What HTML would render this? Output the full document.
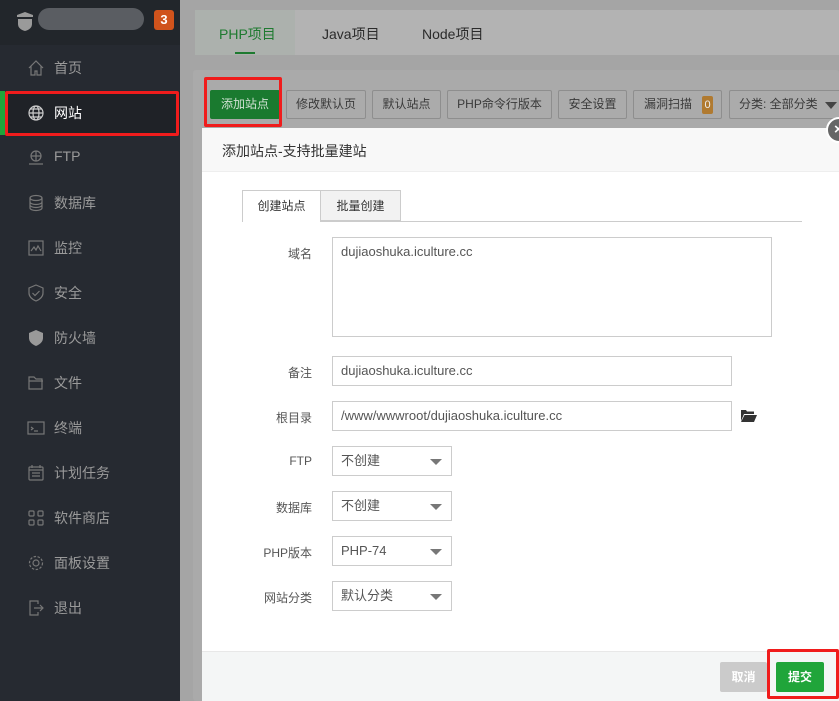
<!DOCTYPE html>
<html><head><meta charset="utf-8"><style>
*{box-sizing:border-box;margin:0;padding:0}
body{width:839px;height:701px;overflow:hidden;background:#a5a5a5;font-family:"Liberation Sans","Noto Sans CJK SC",sans-serif;font-size:13px;color:#333;position:relative}
.a{position:absolute}
#side{left:0;top:0;width:180px;height:701px;background:#262a31}
#logo{left:0;top:0;width:180px;height:45px;background:#22262b}
.item{position:absolute;left:0;width:180px;height:45px;color:#9a9a9a;font-size:14px}
.item span{position:absolute;left:54px;top:13px}
.item svg{position:absolute;left:27px;top:14px}
.btn{position:absolute;top:90px;height:29px;border:1px solid #8e8e8e;border-radius:2px;background:#ababab;color:#3a3a3a;font-size:12px;line-height:27px;text-align:center}
.lbl{position:absolute;width:80px;left:232px;text-align:right;font-size:12px;color:#555}
.inp{position:absolute;left:332px;border:1px solid #ccc;background:#fff;font-size:13px;color:#555;padding-left:8px;line-height:28px}
.sel{width:120px;height:30px}
.sel:after{content:"";position:absolute;right:9px;top:12px;border-left:6px solid transparent;border-right:6px solid transparent;border-top:6px solid #777}
.red{position:absolute;border:3px solid #f01c1c;border-radius:2px}
</style></head><body>
<div id="side" class="a"></div>
<div id="logo" class="a"></div>
<svg class="a" style="left:14px;top:10px" width="22" height="22" viewBox="0 0 22 22"><path d="M3 5l8-3 8 3v2H3z M4 9h14v5q0 5-7 7-7-2-7-7z" fill="#9a9a9a"/></svg>
<div class="a" style="left:38px;top:8px;width:106px;height:22px;border-radius:11px;background:#5a5d62"></div>
<div class="a" style="left:154px;top:10px;width:20px;height:20px;border-radius:3px;background:#d0531c;color:#fff;font-weight:bold;text-align:center;line-height:20px;font-size:13px">3</div>
<div class="a" style="left:0;top:91px;width:5px;height:44px;background:#20a53a"></div>
<div class="a" style="left:5px;top:91px;width:175px;height:44px;background:#1f2227"></div>
<div class="item" style="top:45px"><svg width="18" height="18" viewBox="0 0 18 18" fill="none" stroke="#777" stroke-width="1.2"><path d="M2 9L9 2l7 7M4 7v9h4v-4h2v4h4V7"/></svg><span>首页</span></div>
<div class="item" style="top:90px;color:#fff"><svg width="18" height="18" viewBox="0 0 18 18" fill="none" stroke="#ccc" stroke-width="1.2"><circle cx="9" cy="9" r="7"/><ellipse cx="9" cy="9" rx="3" ry="7"/><path d="M2 9h14M3 5h12M3 13h12"/></svg><span>网站</span></div>
<div class="item" style="top:135px"><svg width="18" height="18" viewBox="0 0 18 18" fill="none" stroke="#777" stroke-width="1.2"><circle cx="9" cy="7" r="5"/><path d="M4 7h10M9 2v10M2 15h14"/></svg><span>FTP</span></div>
<div class="item" style="top:180px"><svg width="18" height="18" viewBox="0 0 18 18" fill="none" stroke="#777" stroke-width="1.2"><ellipse cx="9" cy="4" rx="6" ry="2.5"/><path d="M3 4v10c0 1.5 3 2.5 6 2.5s6-1 6-2.5V4M3 8c0 1.5 3 2.5 6 2.5S15 9.5 15 8M3 11c0 1.5 3 2.5 6 2.5s6-1 6-2.5"/></svg><span>数据库</span></div>
<div class="item" style="top:225px"><svg width="18" height="18" viewBox="0 0 18 18" fill="none" stroke="#777" stroke-width="1.2"><rect x="2" y="2" width="14" height="14"/><path d="M4 12l3-4 2 3 2-4 3 5"/></svg><span>监控</span></div>
<div class="item" style="top:270px"><svg width="18" height="18" viewBox="0 0 18 18" fill="none" stroke="#777" stroke-width="1.2"><path d="M9 1l7 3v5q0 5-7 8-7-3-7-8V4z"/><path d="M5.5 9l2.5 2.5 4.5-4.5"/></svg><span>安全</span></div>
<div class="item" style="top:315px"><svg width="18" height="18" viewBox="0 0 18 18"><path d="M9 1l7 3v5q0 5-7 8-7-3-7-8V4z" fill="#999"/></svg><span>防火墙</span></div>
<div class="item" style="top:360px"><svg width="18" height="18" viewBox="0 0 18 18" fill="none" stroke="#777" stroke-width="1.2"><path d="M2 15V3h5l2 2h6v10z M2 7h14"/></svg><span>文件</span></div>
<div class="item" style="top:405px"><svg width="18" height="18" viewBox="0 0 18 18" fill="none" stroke="#777" stroke-width="1.2"><rect x="1" y="3" width="16" height="12"/><path d="M4 8l2 1.5-2 1.5M7 12h4"/></svg><span>终端</span></div>
<div class="item" style="top:450px"><svg width="18" height="18" viewBox="0 0 18 18" fill="none" stroke="#777" stroke-width="1.2"><rect x="2" y="3" width="14" height="13" rx="1"/><path d="M2 6h14M5 1v3M13 1v3M5 9h8M5 12h8"/></svg><span>计划任务</span></div>
<div class="item" style="top:495px"><svg width="18" height="18" viewBox="0 0 18 18" fill="none" stroke="#777" stroke-width="1.2"><rect x="2" y="2" width="5" height="5" rx="1"/><rect x="11" y="2" width="5" height="5" rx="1"/><rect x="2" y="11" width="5" height="5" rx="1"/><rect x="11" y="11" width="5" height="5" rx="1"/></svg><span>软件商店</span></div>
<div class="item" style="top:540px"><svg width="18" height="18" viewBox="0 0 18 18" fill="none" stroke="#777" stroke-width="1.2"><circle cx="9" cy="9" r="3"/><circle cx="9" cy="9" r="6.5" stroke-dasharray="2.5 1.5"/></svg><span>面板设置</span></div>
<div class="item" style="top:585px"><svg width="18" height="18" viewBox="0 0 18 18" fill="none" stroke="#777" stroke-width="1.2"><path d="M11 5V2H3v14h8v-3M7 9h9M13 6l3 3-3 3"/></svg><span>退出</span></div>

<div class="a" style="left:195px;top:10px;width:644px;height:45px;background:#b3b3b3;border-radius:2px 0 0 2px"></div>
<div class="a" style="left:195px;top:10px;width:100px;height:45px;background:#acb1ad"></div>
<div class="a" style="left:219px;top:24px;color:#1e7a30;font-size:14px">PHP项目</div>
<div class="a" style="left:235px;top:52px;width:20px;height:2px;background:#1e7a30"></div>
<div class="a" style="left:322px;top:24px;color:#2b2b2b;font-size:14px">Java项目</div>
<div class="a" style="left:422px;top:24px;color:#2b2b2b;font-size:14px">Node项目</div>
<div class="a" style="left:193px;top:70px;width:646px;height:631px;background:#aaa;border-radius:3px"></div>
<div class="btn" style="left:210px;width:70px;background:#1a7a2f;border-color:#1a7a2f;color:#cfe0d2">添加站点</div>
<div class="btn" style="left:286px;width:80px">修改默认页</div>
<div class="btn" style="left:372px;width:69px">默认站点</div>
<div class="btn" style="left:447px;width:105px">PHP命令行版本</div>
<div class="btn" style="left:558px;width:69px">安全设置</div>
<div class="btn" style="left:633px;width:89px;text-align:left;padding-left:10px">漏洞扫描<span style="position:absolute;left:68px;top:5px;width:11px;height:18px;background:#b07a30;color:#eee;line-height:18px;font-size:11px;border-radius:2px;text-align:center">0</span></div>
<div class="btn" style="left:729px;width:115px;text-align:left;padding-left:9px">分类: 全部分类<span style="position:absolute;left:95px;top:11px;border-left:6px solid transparent;border-right:6px solid transparent;border-top:7px solid #444"></span></div>

<div class="a" style="left:202px;top:128px;width:637px;height:573px;background:#fff"></div>
<div class="a" style="left:202px;top:128px;width:637px;height:44px;background:#f8f8f8;border-bottom:1px solid #eee"></div>
<div class="a" style="left:222px;top:141px;font-size:14px;color:#333">添加站点-支持批量建站</div>
<div class="a" style="left:826px;top:117px;width:26px;height:26px;border-radius:50%;background:#666;border:2px solid #fff;color:#fff;font-weight:bold;line-height:21px;padding-left:6px;font-size:15px">×</div>

<div class="a" style="left:242px;top:221px;width:560px;height:1px;background:#ccc"></div>
<div class="a" style="left:242px;top:190px;width:79px;height:32px;background:#fff;border:1px solid #ccc;border-bottom:none;text-align:center;line-height:31px;font-size:12px">创建站点</div>
<div class="a" style="left:321px;top:190px;width:80px;height:31px;background:#f2f2f2;border:1px solid #ccc;border-left:none;text-align:center;line-height:31px;font-size:12px">批量创建</div>

<div class="lbl" style="top:245px">域名</div>
<div class="inp" style="top:237px;width:440px;height:100px;line-height:28px">dujiaoshuka.iculture.cc</div>
<div class="lbl" style="top:364px">备注</div>
<div class="inp" style="top:356px;width:400px;height:30px">dujiaoshuka.iculture.cc</div>
<div class="lbl" style="top:409px">根目录</div>
<div class="inp" style="top:401px;width:400px;height:30px">/www/wwwroot/dujiaoshuka.iculture.cc</div>
<svg class="a" style="left:741px;top:409px" width="16" height="13" viewBox="0 0 16 13"><path d="M0 1h5l1 1.5h7V5H3L0 12z M3.5 6H16l-3 7H0z" fill="#333"/></svg>
<div class="lbl" style="top:454px">FTP</div>
<div class="inp sel" style="top:446px">不创建</div>
<div class="lbl" style="top:499px">数据库</div>
<div class="inp sel" style="top:491px">不创建</div>
<div class="lbl" style="top:544px">PHP版本</div>
<div class="inp sel" style="top:536px">PHP-74</div>
<div class="lbl" style="top:589px">网站分类</div>
<div class="inp sel" style="top:581px">默认分类</div>

<div class="a" style="left:202px;top:651px;width:637px;height:50px;background:#f4f6f6;border-top:1px solid #e8e8e8"></div>
<div class="a" style="left:720px;top:662px;width:47px;height:30px;background:#cbcbcb;color:#fff;border-radius:2px;text-align:center;line-height:30px;font-size:12px;font-weight:bold">取消</div>
<div class="a" style="left:776px;top:662px;width:48px;height:30px;background:#20a53a;color:#fff;border-radius:2px;text-align:center;line-height:30px;font-size:12px;font-weight:bold">提交</div>

<div class="red" style="left:204px;top:77px;width:78px;height:50px"></div>
<div class="red" style="left:5px;top:91px;width:174px;height:45px"></div>
<div class="red" style="left:767px;top:649px;width:72px;height:50px"></div>
</body></html>
